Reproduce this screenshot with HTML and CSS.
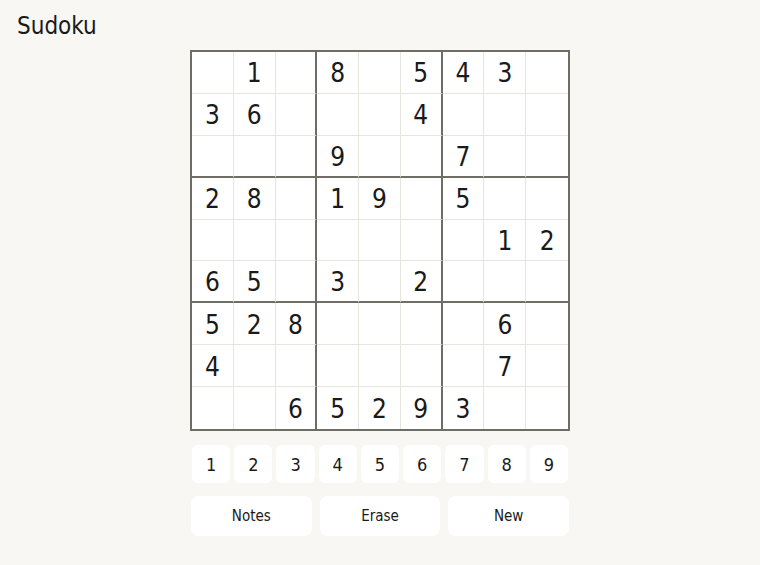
FILE: index.html
```html
<!DOCTYPE html>
<html lang="en">
<head>
    <meta charset="UTF-8">
    <meta name="viewport" content="width=device-width, initial-scale=1.0">
    <title>Sudoku</title>
    <link rel="stylesheet" href="styles.css">
</head>
<body>
    <h1 class="title">Sudoku</h1>

    <div class="game">
        <div class="board" id="board"></div>

        <div class="pad">
            <button class="pad-key">1</button>
            <button class="pad-key">2</button>
            <button class="pad-key">3</button>
            <button class="pad-key">4</button>
            <button class="pad-key">5</button>
            <button class="pad-key">6</button>
            <button class="pad-key">7</button>
            <button class="pad-key">8</button>
            <button class="pad-key">9</button>
        </div>

        <div class="actions">
            <button class="action">Notes</button>
            <button class="action">Erase</button>
            <button class="action">New</button>
        </div>
    </div>

    <script>
        // 0 = empty cell
        const puzzle = [
            '010805430',
            '360004000',
            '000900700',
            '280190500',
            '000000012',
            '650302000',
            '528000060',
            '400000070',
            '006529300'
        ];

        const board = document.getElementById('board');
        puzzle.forEach((row, r) => {
            row.split('').forEach((d, c) => {
                const cell = document.createElement('div');
                cell.className = 'cell';
                if (c % 3 === 2 && c < 8) cell.classList.add('box-right');
                if (r % 3 === 2 && r < 8) cell.classList.add('box-bottom');
                if (c === 8) cell.classList.add('last-col');
                if (r === 8) cell.classList.add('last-row');
                if (d !== '0') cell.textContent = d;
                board.appendChild(cell);
            });
        });
    </script>
</body>
</html>
```

FILE: styles.css
```css
body {
    background-color: #f8f7f3;
    color: #1a1a1a;
    font-family: "DejaVu Sans Condensed", "DejaVu Sans", sans-serif;
    font-stretch: condensed;
    margin: 0;
    padding: 0;
}
.title {
    font-size: 24px;
    font-weight: normal;
    margin: 0;
    padding: 12px 17px 0;
    height: 39px;
    box-sizing: border-box;
}
.game {
    display: flex;
    flex-direction: column;
    align-items: center;
    margin-top: 11px;
}
.board {
    width: 380px;
    height: 381px;
    box-sizing: border-box;
    border: 2px solid #6e6d66;
    display: grid;
    grid-template-columns: repeat(9, 1fr);
    grid-template-rows: repeat(9, 1fr);
    background-color: #fff;
}
.cell {
    display: flex;
    align-items: center;
    justify-content: center;
    font-size: 26px;
    border-right: 1px solid #e6e4de;
    border-bottom: 1px solid #e6e4de;
    padding-top: 2px;
}
.cell.box-right {
    border-right: 2px solid #6e6d66;
}
.cell.box-bottom {
    border-bottom: 2px solid #6e6d66;
}
.cell.last-col {
    border-right: none;
}
.cell.last-row {
    border-bottom: none;
}
.pad {
    width: 380px;
    box-sizing: border-box;
    padding: 0 2px;
    margin-top: 14px;
    display: grid;
    grid-template-columns: repeat(9, 1fr);
    gap: 4px;
}
.pad-key {
    height: 38px;
    background-color: #fff;
    color: #1a1a1a;
    border: none;
    border-radius: 6px;
    font-family: inherit;
    font-stretch: inherit;
    font-size: 18px;
    padding: 0;
    cursor: pointer;
}
.actions {
    width: 380px;
    box-sizing: border-box;
    padding: 0 1px;
    margin-top: 13px;
    display: grid;
    grid-template-columns: repeat(3, 1fr);
    gap: 8px;
}
.action {
    height: 40px;
    background-color: #fff;
    color: #1a1a1a;
    border: none;
    border-radius: 8px;
    font-family: inherit;
    font-stretch: inherit;
    font-size: 15px;
    padding: 0;
    cursor: pointer;
}
```
